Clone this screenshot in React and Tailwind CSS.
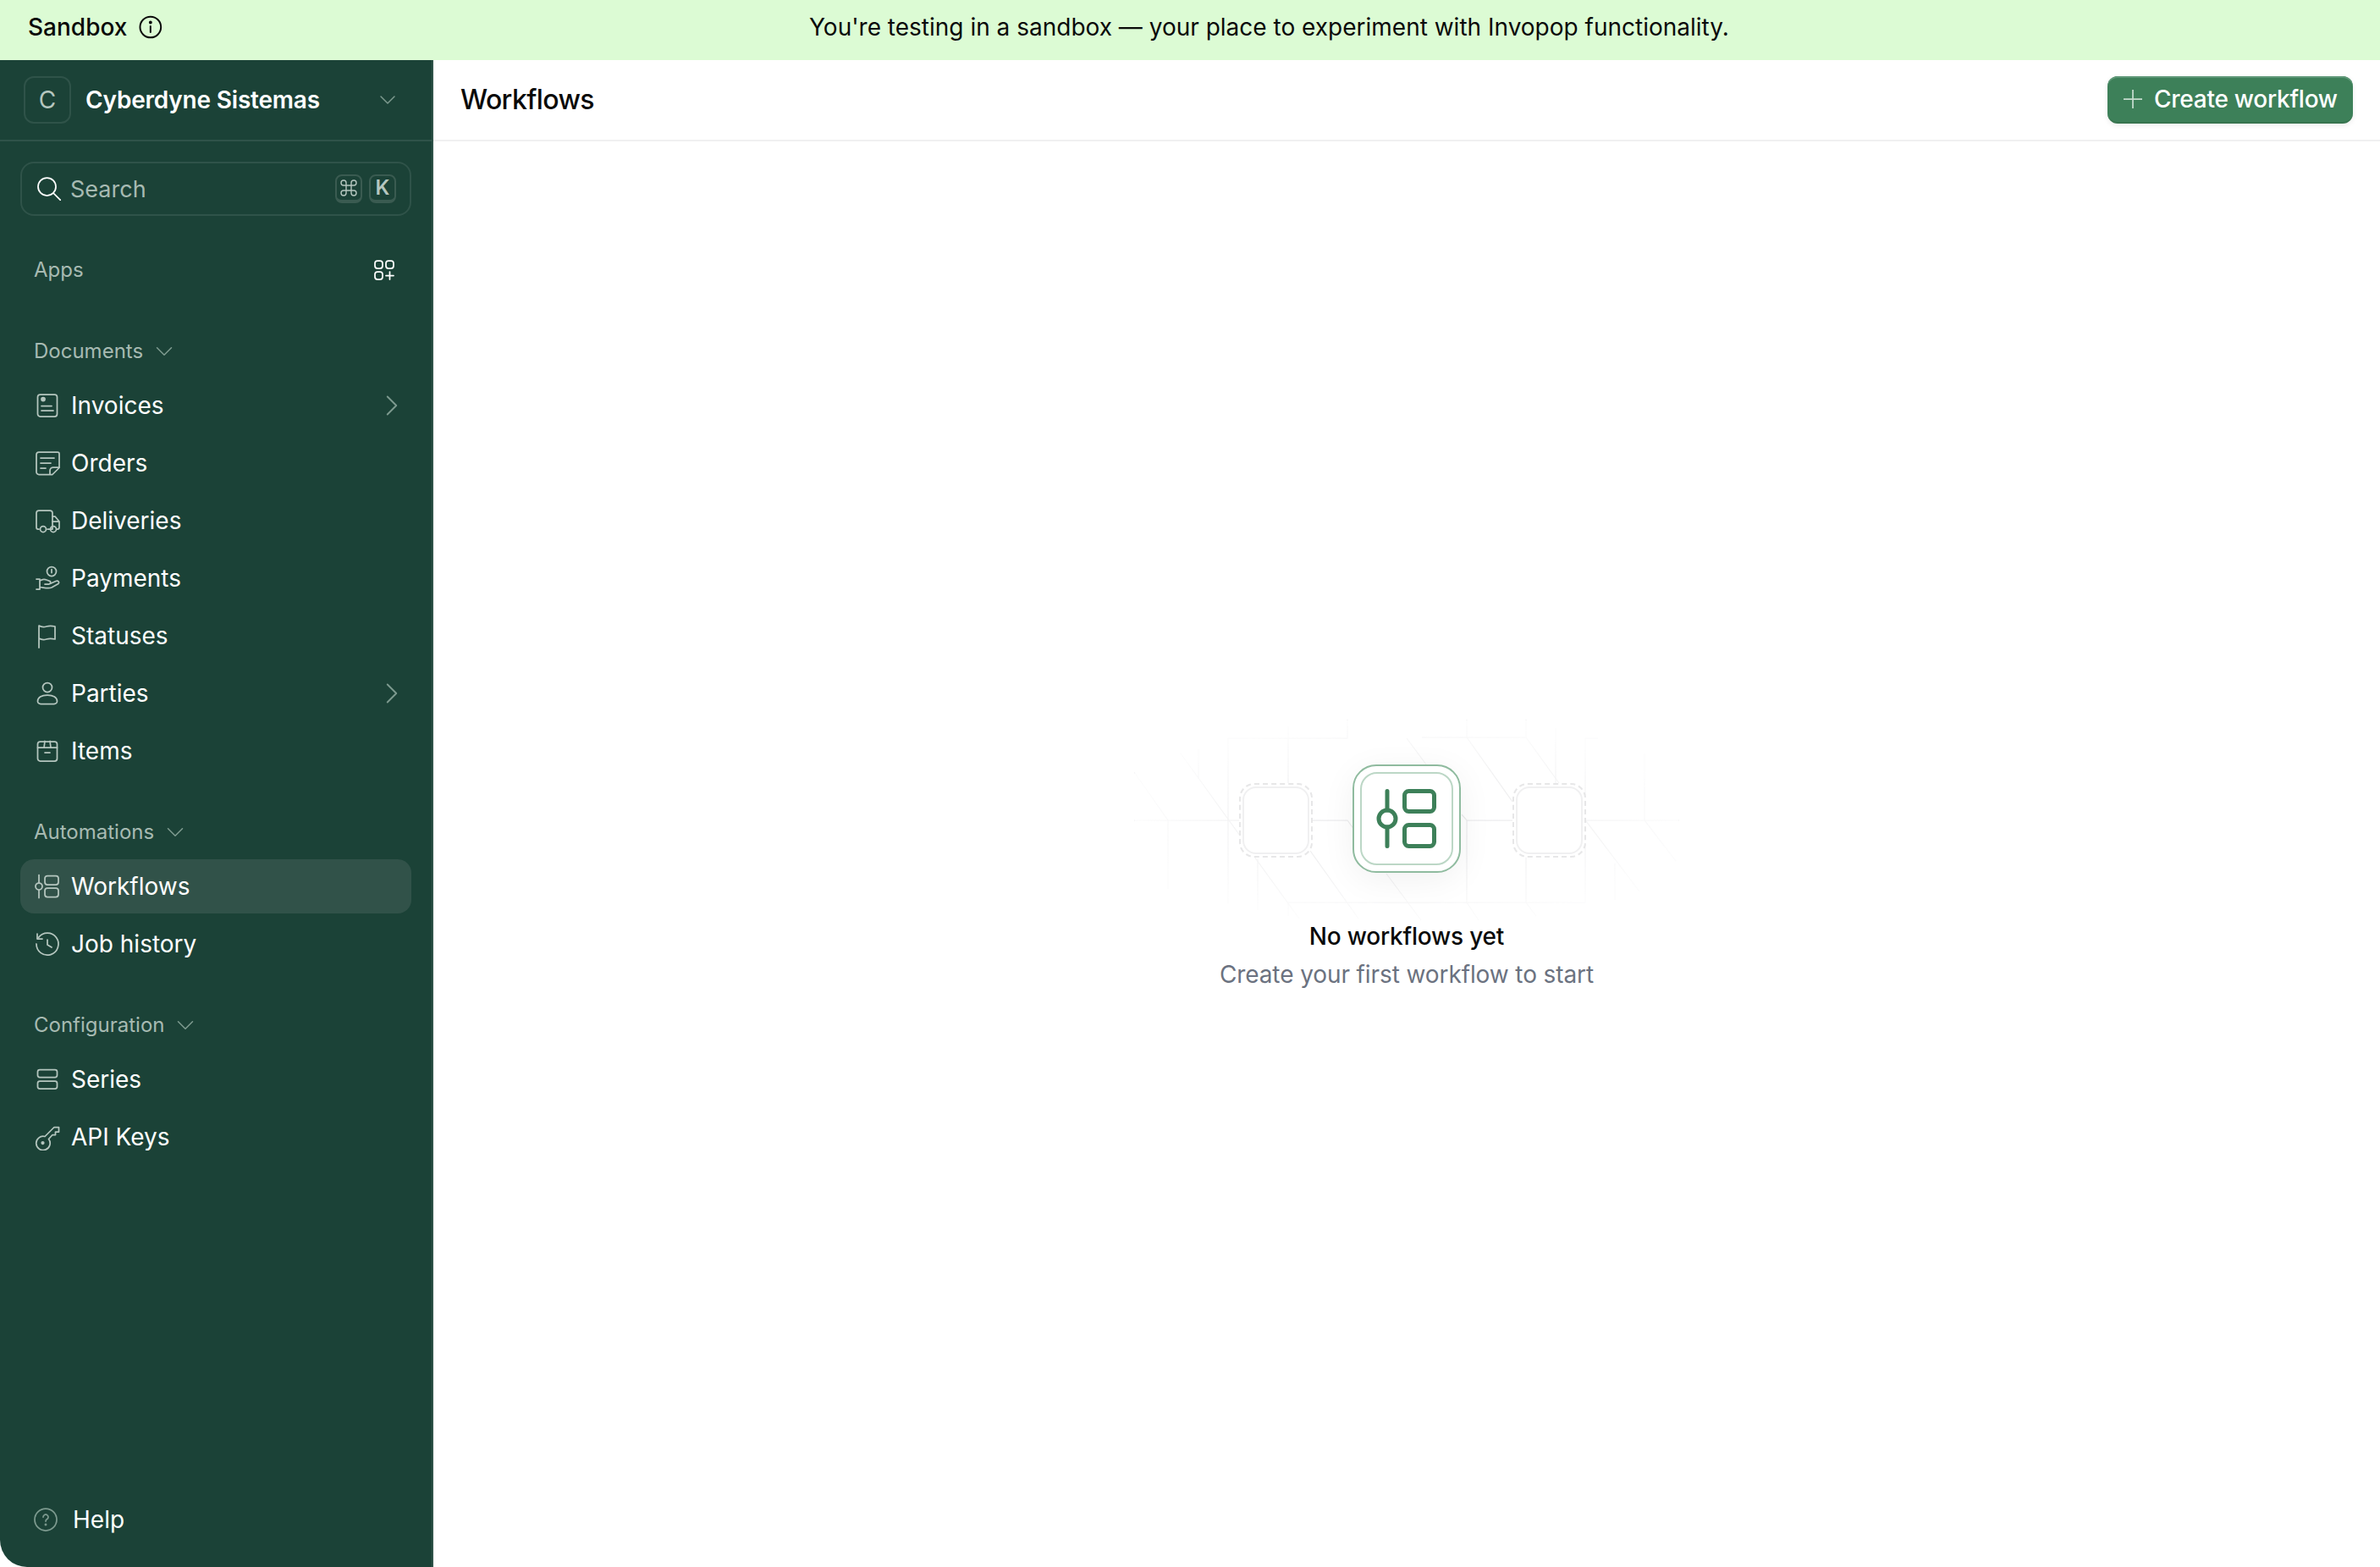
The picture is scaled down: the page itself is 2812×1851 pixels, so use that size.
import { ChevronDown, ChevronRight, Command } from 'lucide-react';

const font = { fontFamily: 'Inter' };

const InvoiceIcon = () => (
  <>
    <rect x="4.500" y="3" width="23" height="26" rx="3" />
    <circle cx="11" cy="8.500" r="2" fill="currentColor" />
    <path d="M9 16.500h12M9 22h14" />
  </>
);
const OrderIcon = () => (
  <>
    <path d="M18 29.500H6a3 3 0 0 1-3-3V6a3 3 0 0 1 3-3h22a2 2 0 0 1 2 2v16.500L22 29.500z" />
    <path d="M8 10h16M8 16h12M8 22h6M19 29v-4a4 4 0 0 1 4-4h7" />
  </>
);
const TruckIcon = () => (
  <>
    <path d="M6 26H5a2 2 0 0 1-2-2V7a3 3 0 0 1 3-3h13a3 3 0 0 1 3 3v19h-6" />
    <path d="M22 11h3l5 6v7a2 2 0 0 1-2 2h-1M22 17h8" />
    <circle cx="11" cy="26" r="3.500" />
    <circle cx="23" cy="26" r="3.500" />
  </>
);
const PaymentIcon = () => (
  <>
    <circle cx="21" cy="8" r="5.500" />
    <path d="M21 5.500v4" />
    <path d="M3 17h4v12H3M7 19c3-2 6-2 8-1l4 1.500a2 2 0 0 1-1 3.500h-5M18 23l8-3.500c3-1 4.500 1.500 3 3L21 27c-4 1.500-9 0-14-.5" />
  </>
);
const FlagIcon = () => <path d="M6 30V4c3 2 6 2 9 1s6-1 10 0v15c-4-1-7-1-10 0s-6 1-9-1" />;
const PersonIcon = () => (
  <>
    <circle cx="16" cy="9" r="5.500" />
    <path d="M16 18C9 18 4.500 21 4.500 25.500c0 2 2.500 3 4 3h15c1.500 0 4-1 4-3C27.500 21 23 18 16 18z" />
  </>
);
const BoxIcon = () => (
  <>
    <rect x="4.500" y="5" width="23" height="23" rx="3" />
    <path d="M4.500 12h23M13 4.500 12 12M19 4.500l1 7.500M13 18h6" />
  </>
);
const WorkflowIcon = () => (
  <>
    <path d="M6 2.500v9M6 20.500v9" />
    <circle cx="6" cy="16" r="4" />
    <rect x="13" y="3.500" width="16" height="10.500" rx="3" />
    <rect x="13" y="18" width="16" height="10.500" rx="3" />
  </>
);
const HistoryIcon = () => (
  <>
    <path d="M5.500 8.500A13 13 0 1 1 3 16" />
    <path d="M4 4v6h6M16 11v6l5 3" />
  </>
);
const SeriesIcon = () => (
  <>
    <rect x="4.500" y="4.500" width="23" height="9" rx="2.500" />
    <rect x="4.500" y="18" width="23" height="9" rx="2.500" />
  </>
);
const KeyIcon = () => (
  <>
    <path d="M13 15.500 24 4.500h5.500V10h-4v3.500H22L17.500 18.500A8.200 8.200 0 1 1 13 15.500z" />
    <circle cx="10.500" cy="23" r="1.250" fill="currentColor" />
  </>
);

function NavIcon({ children }) {
  return (
    <svg
      viewBox="0 0 32 32"
      fill="none"
      stroke="currentColor"
      strokeWidth="1.75"
      strokeLinecap="round"
      strokeLinejoin="round"
      className="w-8 h-8 shrink-0 text-[#b5c6bf]"
    >
      {children}
    </svg>
  );
}

function NavItem({ icon, label, hasChildren, active }) {
  return (
    <div
      className={`h-16 rounded-2xl flex items-center gap-3 pl-4 pr-[2px] ${active ? 'bg-[#315249]' : ''}`}
    >
      <NavIcon>{icon}</NavIcon>
      <span className="flex-1 text-[28px] leading-none text-white">{label}</span>
      {hasChildren && <ChevronRight className="w-[42px] h-[42px] text-[#7d9a8f]" strokeWidth={1.1} />}
    </div>
  );
}

function SectionLabel({ children }) {
  return (
    <div className="h-16 mt-8 flex items-center gap-2 pl-4 text-[24px] leading-none text-[#a7bab2]">
      {children}
      <ChevronDown className="w-[34px] h-[34px] text-[#7d9a8f]" strokeWidth={1.1} />
    </div>
  );
}

function Kbd({ children }) {
  return (
    <span className="w-8 h-[34px] rounded-lg border-2 border-b-4 border-[#3a5b51] flex items-center justify-center text-[24px] font-semibold leading-none text-[#b5c6bf]">
      {children}
    </span>
  );
}

function GhostNode({ className = '' }) {
  return (
    <div className={`w-[87px] h-[88px] mt-1 shrink-0 rounded-[18px] border-2 border-dashed border-[#e7e7e8] bg-white p-[2px] ${className}`}>
      <div className="w-full h-full rounded-2xl border-2 border-[#f0f0f1]" />
    </div>
  );
}

// faint circuit lines behind the empty state
function EmptyBackdrop() {
  return (
    <svg
      viewBox="0 0 644 240"
      fill="none"
      stroke="#ececed"
      strokeWidth="1.250"
      className="absolute left-0 top-0 w-[644px] h-[240px]"
    >
      <defs>
        <radialGradient id="fade" cx="50%" cy="50%" r="50%">
          <stop offset="0%" stopColor="white" />
          <stop offset="35%" stopColor="white" stopOpacity="0.95" />
          <stop offset="100%" stopColor="white" stopOpacity="0.15" />
        </radialGradient>
        <mask id="fade-mask">
          <rect width="644" height="240" fill="url(#fade)" />
        </mask>
      </defs>
      <g mask="url(#fade-mask)">
        <path d="M0 119H252l8 11M387 112l6 7H447M533 119H644" />
        <path d="M111 22H252V0M340 21H463V0M533 22H548M182 216H533" />
        <path d="M182 8V75M111 22V217M76 35V70M40 119V200M146 165V225M182 216V232" />
        <path d="M393 0V21M393 119V216M498 10V75M533 22V216M603 40V119M568 170V213M463 162V216" />
        <path d="M55 40 125 137M0 62 40 119M142 162 195 235M208 155 265 235M298 182 339 237M322 22 345 53" />
        <path d="M393 21 447 97M463 21 502 75M534 120 597 203M603 119 640 167M393 216 407 237M463 216 475 232" />
      </g>
    </svg>
  );
}

export default function App() {
  return (
    <div style={font} className="w-[2812px] h-[1851px] flex flex-col bg-white overflow-hidden">
      <div className="h-[71px] shrink-0 bg-[#dcfbd4] flex items-center pl-[33px] pb-2 text-[28px] leading-none text-[#0a0a0a]">
        <div className="w-[159px] shrink-0 flex items-center gap-[14px]">
          <span className="font-medium">Sandbox</span>
          <svg viewBox="0 0 28 28" fill="none" stroke="currentColor" strokeWidth="2" strokeLinecap="round" className="w-7 h-7">
            <circle cx="14" cy="14" r="12.500" />
            <path d="M14 13v7" />
            <circle cx="14" cy="8.500" r="1" fill="currentColor" />
          </svg>
        </div>
        <span className="ml-[764px]">You're testing in a sandbox — your place to experiment with Invopop functionality.</span>
      </div>

      <div className="flex-1 flex min-h-0">
        <aside className="w-[512px] shrink-0 bg-[#1b4237] border-r-2 border-[#2f5349] rounded-bl-[32px] flex flex-col">
          <div className="h-[96px] shrink-0 border-b-2 border-[#2f5349] flex items-center pl-7 pr-9 gap-[17px]">
            <div className="w-14 h-14 rounded-xl border-2 border-[#2f5349] flex items-center justify-center text-[28px] leading-none text-[#b5c6bf]">
              C
            </div>
            <span className="flex-1 text-[28px] leading-none font-semibold tracking-[-0.2px] text-white">Cyberdyne Sistemas</span>
            <ChevronDown className="w-8 h-8 text-[#7d9a8f]" strokeWidth={1.1} />
          </div>

          <div className="flex-1 flex flex-col px-6 pt-6 pb-6">
            <div className="h-16 shrink-0 rounded-2xl border-2 border-[#2f5349] flex items-center pl-[18px] pr-4 gap-[11px]">
              <svg viewBox="0 0 28 28" fill="none" stroke="#ffffff" strokeWidth="1.75" strokeLinecap="round" className="w-7 h-7 shrink-0">
                <circle cx="11.500" cy="11.500" r="10.500" />
                <path d="M19.500 19.500 27.500 27.500" />
              </svg>
              <span className="flex-1 text-[27px] leading-none text-[#a7bab2]">Search</span>
              <div className="flex gap-2">
                <Kbd><Command className="w-6 h-6" strokeWidth={1.4} /></Kbd>
                <Kbd>K</Kbd>
              </div>
            </div>

            <div className="h-16 mt-8 shrink-0 flex items-center justify-between pl-4 pr-5 text-[24px] leading-none text-[#a7bab2]">
              Apps
              <svg viewBox="0 0 24 24" fill="none" stroke="#ffffff" strokeWidth="1.75" strokeLinecap="round" className="w-6 h-6">
                <rect x="1" y="1" width="9" height="9" rx="3" />
                <rect x="14" y="1" width="9" height="9" rx="3" />
                <rect x="1" y="14" width="9" height="9" rx="3" />
                <path d="M18.500 14v9M14 18.500h9" />
              </svg>
            </div>

            <SectionLabel>Documents</SectionLabel>
            <div className="flex flex-col gap-1">
              <NavItem icon={<InvoiceIcon />} label="Invoices" hasChildren />
              <NavItem icon={<OrderIcon />} label="Orders" />
              <NavItem icon={<TruckIcon />} label="Deliveries" />
              <NavItem icon={<PaymentIcon />} label="Payments" />
              <NavItem icon={<FlagIcon />} label="Statuses" />
              <NavItem icon={<PersonIcon />} label="Parties" hasChildren />
              <NavItem icon={<BoxIcon />} label="Items" />
            </div>

            <SectionLabel>Automations</SectionLabel>
            <div className="flex flex-col gap-1">
              <NavItem icon={<WorkflowIcon />} label="Workflows" active />
              <NavItem icon={<HistoryIcon />} label="Job history" />
            </div>

            <SectionLabel>Configuration</SectionLabel>
            <div className="flex flex-col gap-1">
              <NavItem icon={<SeriesIcon />} label="Series" />
              <NavItem icon={<KeyIcon />} label="API Keys" />
            </div>

            <div className="mt-auto h-[64px] flex items-center gap-[18px] pl-4">
              <svg viewBox="0 0 28 28" fill="none" stroke="#7d9a8f" strokeWidth="1.75" strokeLinecap="round" className="w-7 h-7">
                <circle cx="14" cy="14" r="13" />
                <path d="M11 11a3 3 0 1 1 4.500 2.600c-1 .6-1.500 1.200-1.500 2.400" />
                <circle cx="14" cy="20" r=".6" />
              </svg>
              <span className="text-[28px] leading-none text-white">Help</span>
            </div>
          </div>
        </aside>

        <main className="flex-1 flex flex-col min-w-0">
          <header className="h-[96px] shrink-0 border-b-2 border-[#f0f0f1] flex items-center justify-between pl-8 pr-8">
            <h1 className="text-[32px] leading-none font-medium tracking-[-0.6px] text-[#0a0a0a]">Workflows</h1>
            <button className="h-14 w-[290px] pl-4 rounded-xl bg-[#3d8059] border-b-2 border-[#37744f] shadow-[inset_0_2px_0_#5f9878,0_2px_6px_rgba(0,0,0,0.08)] flex items-center gap-[11px] text-[28px] leading-none font-medium tracking-[-0.25px] text-white">
              <svg viewBox="0 0 28 28" fill="none" stroke="#c5dbce" strokeWidth="1.75" className="w-7 h-7 shrink-0">
                <path d="M14 3v22M3 14h22" />
              </svg>
              Create workflow
            </button>
          </header>

          <div className="flex-1 flex flex-col items-center pt-[683px]">
            <div className="relative w-[644px] h-[240px] flex items-start justify-center">
              <EmptyBackdrop />
              <div className="relative flex items-center mt-[53px]">
                <GhostNode className="ml-[14px] mr-[47px]" />
                <div className="w-32 h-32 rounded-[28px] border-2 border-[#8fbb9f] bg-white p-[7px] shadow-[0_8px_40px_rgba(0,0,0,0.06)]">
                  <div className="w-full h-full rounded-[20px] border-2 border-[#bcd7c6] flex items-center justify-center">
                    <svg viewBox="0 0 72 72" fill="none" stroke="#3d8059" strokeWidth="5" strokeLinecap="round" strokeLinejoin="round" className="w-[72px] h-[72px]">
                      <path d="M13 3.500V26M13 46v22.500" />
                      <circle cx="13" cy="36" r="10" />
                      <rect x="33.500" y="3.500" width="35" height="24" rx="5" />
                      <rect x="33.500" y="43.500" width="35" height="25" rx="5" />
                    </svg>
                  </div>
                </div>
                <GhostNode className="ml-[61px]" />
              </div>
            </div>
            <p className="mt-[-4px] text-[28px] leading-10 font-medium tracking-[-0.2px] text-[#0a0a0a]">No workflows yet</p>
            <p className="mt-[5px] text-[28px] leading-10 tracking-[-0.1px] text-[#6b7280]">Create your first workflow to start</p>
          </div>
        </main>
      </div>
    </div>
  );
}
